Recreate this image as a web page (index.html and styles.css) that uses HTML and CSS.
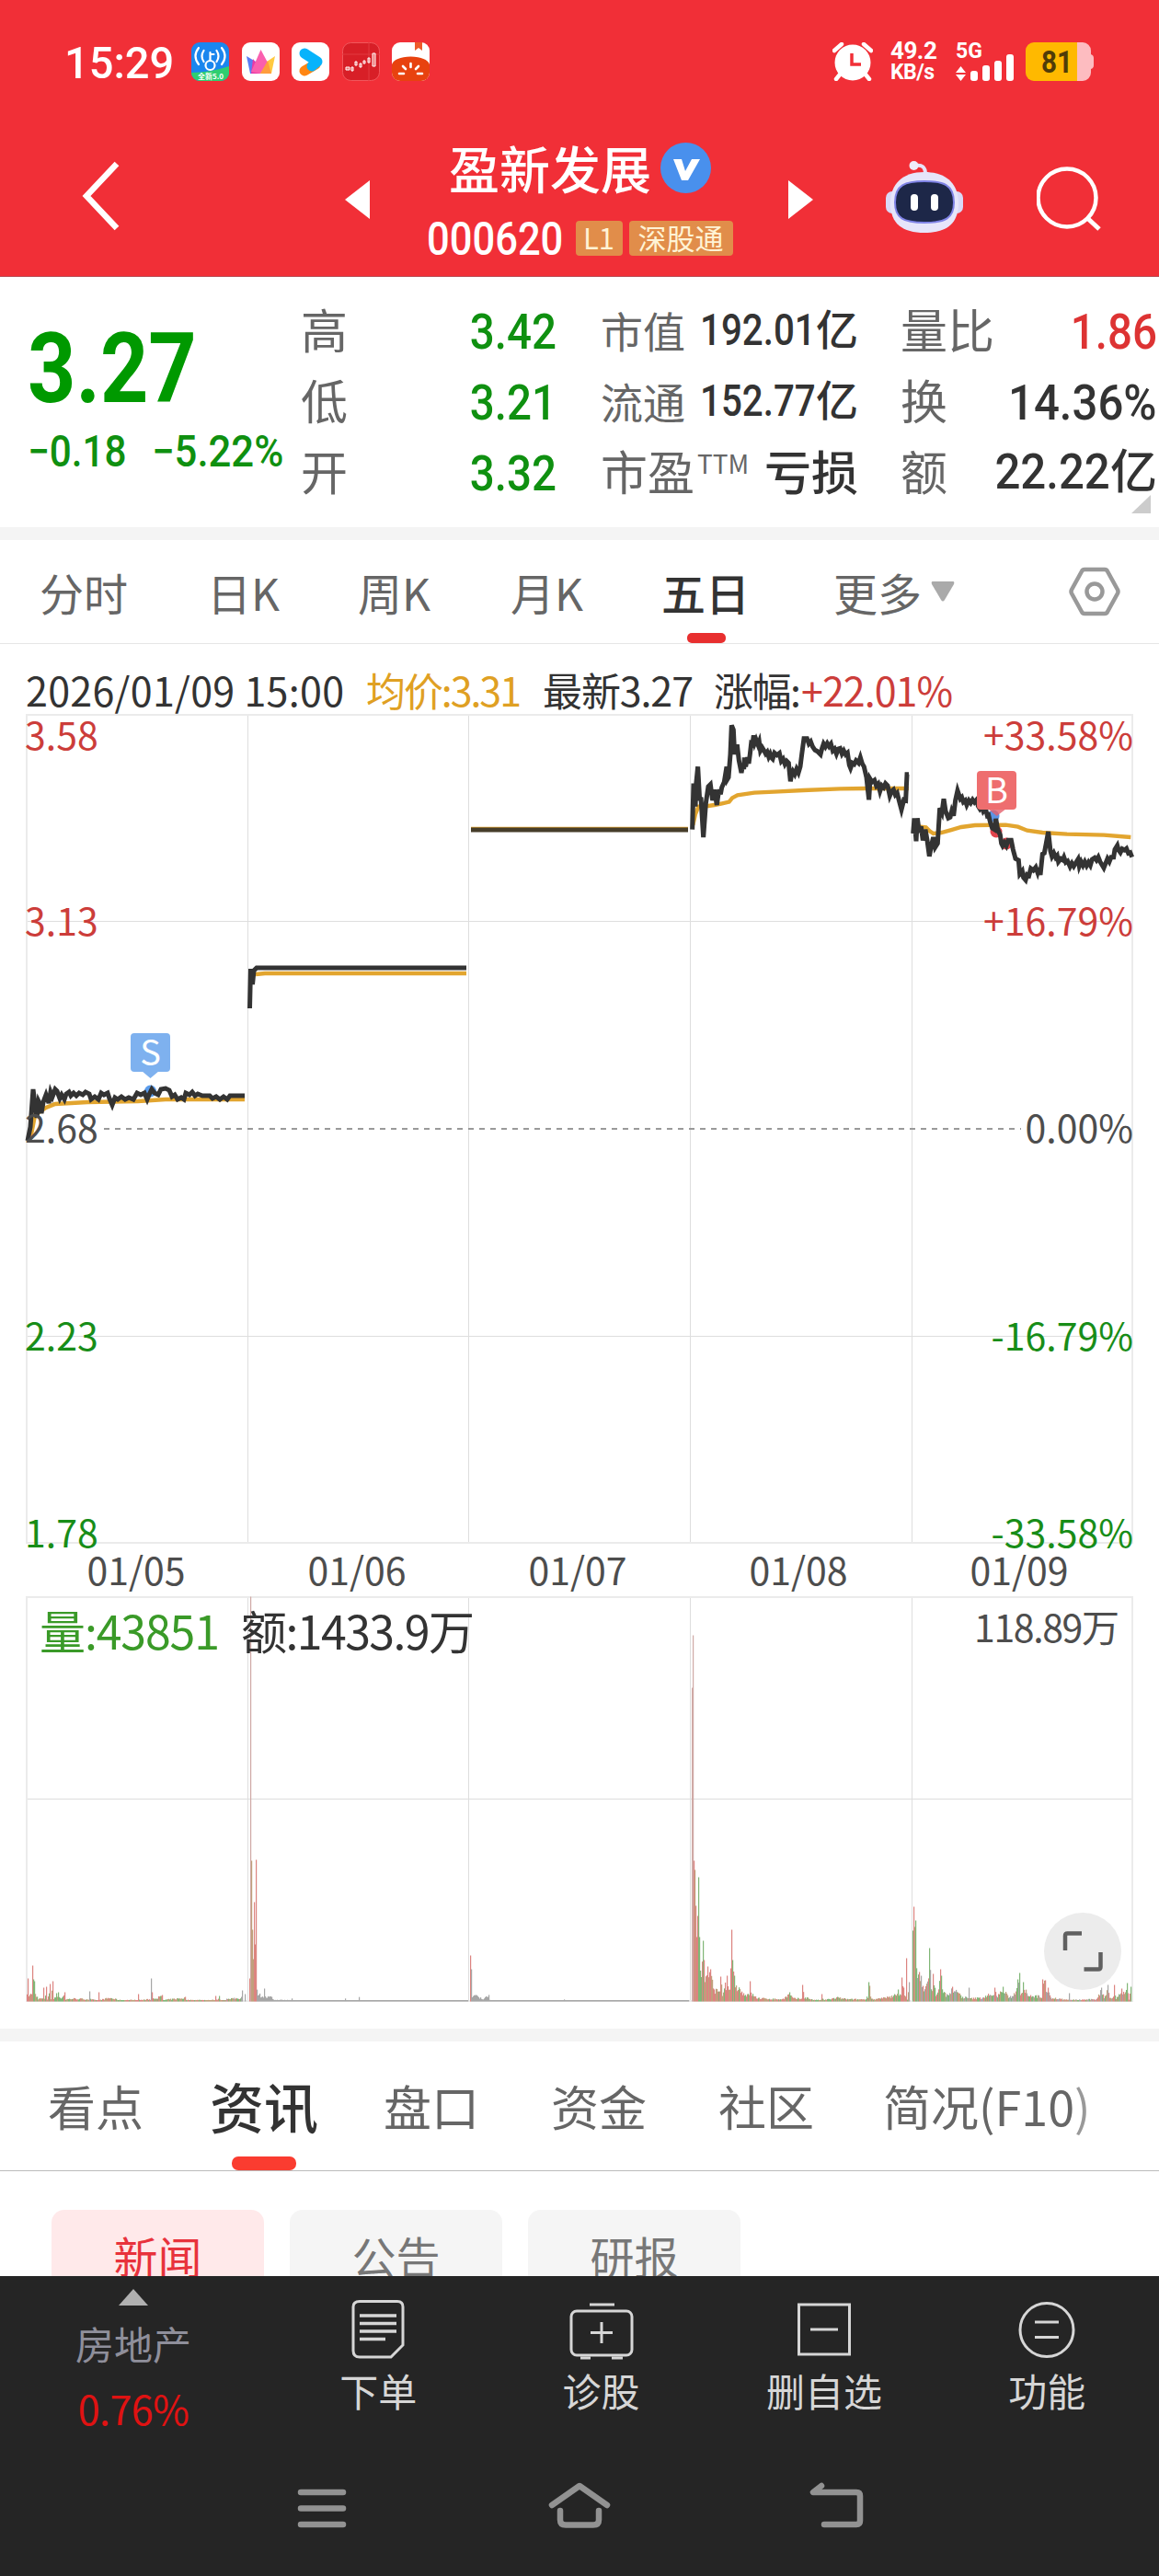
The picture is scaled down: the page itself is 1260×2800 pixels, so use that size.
FILE: index.html
```html
<!DOCTYPE html>
<html lang="zh-CN">
<head>
  <meta charset="UTF-8" />
  <title>盈新发展 000620</title>
  <link rel="stylesheet" href="styles.css">
</head>
<body>
  <div class="status-bar">
    <span class="clock">15:29</span>
    <div class="app-icons">
      <svg width="41" height="42" viewBox="0 0 41 42">
        <rect width="41" height="42" rx="9" fill="#1b86ee"/>
        <path d="M0 33 Q20 33 41 26 V33 a9 9 0 0 1 -9 9 H9 a9 9 0 0 1 -9 -9z" fill="#2fce70"/>
        <g fill="none" stroke="#fff" stroke-width="2.2" stroke-linecap="round">
          <circle cx="20.500" cy="25" r="5"/>
          <path d="M20.500 20V11M20.500 13h4M13.500 9q-4 6 0 12M27.500 9q4 6 0 12M8 6q-7 9 0 18M33 6q7 9 0 18"/>
        </g>
        <text x="21" y="40" class="app-tag">全新5.0</text>
      </svg>
      <svg width="41" height="42" viewBox="0 0 41 42">
        <rect width="41" height="42" rx="9" fill="#fff"/>
        <path d="M5 15 L20 24 L15 34 H9z" fill="#5a7cf5"/>
        <path d="M36 15 L21 25 L20 34 H32z" fill="#ffc940"/>
        <path d="M12 18 L20 28 V34 H10z" fill="#e83aa8"/>
        <path d="M20.500 8 L28 22 L20 34 L10 32z" fill="#fa5fae"/>
        <path d="M28 20 L32 34 H20z" fill="#ff9d3d"/>
      </svg>
      <svg width="41" height="42" viewBox="0 0 41 42">
        <rect width="41" height="42" rx="9" fill="#fff"/>
        <path d="M14 31 L26 24" stroke="#ff8612" stroke-width="11" stroke-linecap="round"/>
        <path d="M14 12 L28 21 L22 26" fill="none" stroke="#06b3fb" stroke-width="11" stroke-linecap="round" stroke-linejoin="round"/>
      </svg>
      <svg width="41" height="42" viewBox="0 0 41 42">
        <rect x=".5" y=".5" width="40" height="41" rx="9" fill="#d81f27" stroke="#f0575c"/>
        <path d="M0 13h41M29 0v42" stroke="#e33b41"/>
        <path d="M4 27h4v3h-4zM10 27h2v4h-2zM14 21h2v4h-2zM19 23h2v4h-2zM23 20h2v3h-2zM28 17h2v5h-2zM33 12h3v14h-3z" fill="#e77" stroke="#fff" stroke-width="1"/>
      </svg>
      <svg width="41" height="42" viewBox="0 0 41 42">
        <rect width="41" height="42" rx="9" fill="#fff"/>
        <path d="M25 0h8v9l-4-3l-4 3z" fill="#ee5a2a"/>
        <path d="M0 24 Q3 16 20.500 15.500 Q38 16 41 24 V33 a9 9 0 0 1 -9 9 H9 a9 9 0 0 1 -9 -9z" fill="#e8420f"/>
        <path d="M8 34l5 0M12 26l3 3M20.500 23v4M29 26l-3 3M33 34l-5 0" stroke="#fff" stroke-width="2.600" stroke-linecap="round"/>
      </svg>
    </div>
    <div class="status-right">
      <svg width="44" height="42" viewBox="0 0 44 42">
        <circle cx="22" cy="22" r="19.500" fill="#fff"/>
        <path d="M2 9l8-7M42 9l-8-7M8 35l-4 5M36 35l4 5" stroke="#fff" stroke-width="4.500" stroke-linecap="round"/>
        <path d="M21 12v12h10" fill="none" stroke="#f12f37" stroke-width="3.500"/>
      </svg>
      <div class="net-speed"><span>49.2</span><span>KB/s</span></div>
      <svg class="signal" width="64" height="42" viewBox="0 0 64 42">
        <text x="0" y="17" class="signal-text">5G</text>
        <path d="M0 33l5.500-7l5.500 7zM0 35l5.500 7l5.500-7z" fill="#fff"/>
        <rect x="16" y="31" width="8" height="11" rx="3" fill="#fff"/>
        <rect x="29" y="25" width="8" height="17" rx="3" fill="#fff"/>
        <rect x="42" y="20" width="8" height="22" rx="3" fill="#fff"/>
        <rect x="55" y="13" width="8" height="29" rx="3" fill="#fff"/>
      </svg>
      <svg width="75" height="42" viewBox="0 0 75 42">
        <path d="M55 0h7a9 9 0 0 1 9 9v4q3 1 3 4v8q0 3 -3 4v4a9 9 0 0 1 -9 9h-7z" fill="#fdbcc0"/>
        <path d="M9 0h47v42h-47a9 9 0 0 1 -9 -9v-24a9 9 0 0 1 9-9z" fill="#ffb900"/>
        <text x="34" y="33" class="battery-text" textLength="34" lengthAdjust="spacingAndGlyphs">81</text>
      </svg>
    </div>
  </div>

  <header class="header">
    <svg class="back" width="42" height="80" viewBox="0 0 42 80">
      <path d="M39 4L6 39L39 74" fill="none" stroke="#fff" stroke-width="6.500"/>
    </svg>
    <svg class="prev" width="27" height="42" viewBox="0 0 27 42"><path d="M0 21L27 0V42z" fill="#fff"/></svg>
    <div class="stock">
      <div class="stock-name">
        <span>盈新发展</span>
        <svg width="55" height="55" viewBox="0 0 55 55">
          <circle cx="27.500" cy="27.500" r="27.500" fill="#4990ed"/>
          <path d="M14 18H23L27 31L34 18H43L30 41H23z" fill="#fff"/>
        </svg>
      </div>
      <div class="stock-code">
        <span class="code">000620</span>
        <span class="badge">L1</span>
        <span class="badge wide">深股通</span>
      </div>
    </div>
    <svg class="next" width="27" height="42" viewBox="0 0 27 42"><path d="M27 21L0 0V42z" fill="#fff"/></svg>
    <svg class="robot" width="84" height="78" viewBox="0 0 84 78">
      <path d="M32 5q11-2 11 9" fill="none" stroke="#e7e3f8" stroke-width="4"/>
      <circle cx="30.500" cy="5" r="5" fill="#efedfb"/>
      <rect x="0" y="33" width="84" height="24" rx="7" fill="#d9d9f7"/>
      <path d="M42 12C66 12 79 25 79 46C79 68 66 78 42 78C18 78 5 68 5 46C5 25 18 12 42 12z" fill="#e6e5fa"/>
      <path d="M42 22C63 22 74 26 74 45C74 62 65 67 42 67C19 67 10 62 10 45C10 26 21 22 42 22z" fill="#1d2748" stroke="#7f83e6" stroke-width="2"/>
      <rect x="27" y="36" width="8" height="18" rx="4" fill="#fff"/>
      <rect x="49" y="36" width="8" height="18" rx="4" fill="#fff"/>
    </svg>
    <svg class="search" width="70" height="70" viewBox="0 0 70 70">
      <circle cx="33" cy="34" r="31.500" fill="none" stroke="#fff" stroke-width="4.500"/>
      <path d="M54 55L68 68" stroke="#fff" stroke-width="5"/>
    </svg>
  </header>

  <section class="quote">
    <div class="price">
      <div class="price-now">3.27</div>
      <div class="price-change"><span>−0.18</span><span class="pct">−5.22%</span></div>
    </div>
    <div class="quote-col">
      <div class="quote-row"><span class="label">高</span><span class="num green">3.42</span></div>
      <div class="quote-row"><span class="label">低</span><span class="num green">3.21</span></div>
      <div class="quote-row"><span class="label">开</span><span class="num green">3.32</span></div>
    </div>
    <div class="quote-col">
      <div class="quote-row small"><span class="label">市值</span><span class="value"><span class="num">192.01</span>亿</span></div>
      <div class="quote-row small"><span class="label">流通</span><span class="value"><span class="num">152.77</span>亿</span></div>
      <div class="quote-row"><span class="label">市盈<sup>TTM</sup></span><span class="value">亏损</span></div>
    </div>
    <div class="quote-col">
      <div class="quote-row"><span class="label">量比</span><span class="num red">1.86</span></div>
      <div class="quote-row"><span class="label">换</span><span class="num turnover">14.36%</span></div>
      <div class="quote-row"><span class="label">额</span><span class="value"><span class="num turnover">22.22</span>亿</span></div>
    </div>
    <svg class="corner" width="21" height="20" viewBox="0 0 21 20"><path d="M21 0V20H0z" fill="#ccc"/></svg>
  </section>

  <nav class="period-tabs">
    <span class="tab">分时</span>
    <span class="tab">日K</span>
    <span class="tab">周K</span>
    <span class="tab">月K</span>
    <span class="tab active">五日</span>
    <span class="tab more">更多<svg width="26" height="22" viewBox="0 0 26 22"><path d="M2 0H24Q26 0 25 3L15 20Q13 23 11 20L1 3Q0 0 2 0z" fill="#aaa"/></svg></span>
    <svg class="settings" width="56" height="54" viewBox="0 0 56 54">
      <path d="M17 3H39Q41 3 42 5L53 25Q54 27 53 29L42 49Q41 51 39 51H17Q15 51 14 49L3 29Q2 27 3 25L14 5Q15 3 17 3z" fill="none" stroke="#999" stroke-width="4.500"/>
      <circle cx="28" cy="27" r="8.500" fill="none" stroke="#999" stroke-width="4.500"/>
    </svg>
  </nav>

  <svg class="chart" width="1260" height="1505" viewBox="0 700 1260 1505">
    <g class="legend">
      <text x="28" y="768" textLength="346">2026/01/09 15:00</text>
      <text x="398" y="768" textLength="169" class="avg-text">均价:3.31</text>
      <text x="590" y="768" textLength="164">最新3.27</text>
      <text x="776" y="768" textLength="95">涨幅:</text>
      <text x="871" y="768" textLength="165" class="up">+22.01%</text>
    </g>

    <!-- grid -->
    <g class="grid">
      <path d="M269.500 777V1677M509.500 777V1677M750.500 777V1677M991.500 777V1677M28 1001.500H1231M28 1452.500H1231"/>
      <path d="M269.500 1736V2175M509.500 1736V2175M750.500 1736V2175M991.500 1736V2175M28 1955.500H1231"/>
      <rect x="29" y="777" width="1202" height="900" class="frame"/>
      <rect x="29" y="1736" width="1202" height="439" class="frame"/>
    </g>
    <path d="M113 1227H1110" class="zero-line"/>

    <!-- trade points -->
    <circle cx="163.500" cy="1186" r="6.500" fill="#5b9cec"/>
    <circle cx="1080" cy="887" r="6.500" fill="#5b94e4"/>
    <circle cx="1083" cy="904" r="6.500" fill="#e0444c"/>
    <circle cx="1094" cy="917" r="6.500" fill="#e0444c"/>

    <!-- 01/05 -->
    <polyline class="avg" points="33,1238 38,1212 50,1204 60,1200 95,1198 150,1197 180,1195 266,1195"/>
    <polyline class="line" points="30,1240 33,1225 36,1184 38,1200 40,1215 42,1197 43,1199 45,1210 47,1198 50,1190 53,1199 55,1187 57,1192 60,1184 62,1186 65,1194 67,1190 70,1195 72,1189 75,1187 77,1191 80,1188 83,1191 86,1188 90,1190 93,1187 97,1189 99,1195 103,1192 107,1195 110,1188 113,1190 117,1188 119,1194 122,1201 125,1193 128,1195 132,1192 136,1195 140,1193 145,1195 149,1188 153,1190 157,1188 160,1195 162,1190 165,1184 168,1188 172,1190 175,1184 180,1183 184,1185 187,1192 190,1190 193,1195 197,1193 200,1195 202,1188 206,1190 209,1187 212,1191 215,1189 220,1191 228,1191 231,1194 235,1192 239,1195 243,1192 247,1195 250,1191 266,1191"/>
    <!-- 01/06 -->
    <polyline class="avg" points="278,1059 288,1058 507,1058"/>
    <polyline class="line" points="271.500,1096 272.500,1053 274.500,1070 276,1055 279,1052 507,1052"/>
    <!-- 01/07 -->
    <polyline class="avg" points="512,901 748,901"/>
    <polyline class="line flat" points="512,902 748,902"/>
    <!-- 01/08, 01/09 -->
    <g transform="translate(740 770) scale(.33333)">
      <polyline class="avg x3" points="40,380 48,345 58,320 70,318 90,318 110,315 135,310 158,305 168,292 185,283 240,275 320,271 400,267 520,262 600,261 744,261"/>
      <polyline class="line x3" points="38,395 42,245 48,320 50,250 56,190 62,300 66,290 74,420 82,310 90,255 97,248 104,300 110,265 118,315 122,285 126,265 130,280 134,258 142,240 150,190 153,230 156,225 162,150 166,55 172,70 176,150 184,118 190,170 198,210 203,180 206,198 208,160 212,190 218,160 222,180 226,150 230,115 234,118 238,88 242,112 246,102 252,118 256,108 260,138 266,128 272,138 277,148 282,142 287,158 292,148 297,162 300,165 306,145 314,152 322,146 328,172 334,165 340,182 346,172 352,178 358,238 362,215 366,205 372,215 378,198 384,210 390,190 395,150 402,98 412,98 418,115 424,108 430,124 438,136 446,140 456,150 461,130 466,115 472,125 478,114 484,124 490,116 496,138 502,132 508,148 514,132 520,130 526,148 532,138 538,150 544,145 550,185 554,195 560,178 566,182 572,170 580,178 586,160 592,180 598,190 606,225 614,298 618,230 624,240 632,234 638,252 644,246 650,270 656,252 662,258 668,245 675,252 682,285 688,270 694,265 700,282 706,276 712,300 720,330 728,298 734,300 738,215 744,215"/>
      <polyline class="avg x3" points="775,385 800,388 812,400 824,408 850,405 880,397 915,387 960,381 1060,380 1100,386 1130,398 1180,405 1260,410 1380,413 1468,420"/>
      <polyline class="line x3" points="758,408 762,358 768,433 772,358 778,405 784,385 790,430 798,395 804,430 811,482 818,445 824,420 830,453 838,440 845,325 852,340 858,295 864,335 868,345 873,358 879,355 884,335 890,350 896,300 903,268 912,295 917,290 922,305 928,300 933,315 940,300 946,308 952,298 958,306 966,297 970,318 976,328 982,320 987,335 994,326 1000,350 1004,348 1010,372 1016,390 1024,395 1028,360 1034,395 1042,412 1046,440 1050,448 1056,438 1062,448 1068,430 1078,430 1084,460 1092,490 1102,495 1106,540 1114,530 1118,552 1125,560 1130,542 1136,545 1142,522 1150,528 1158,518 1164,535 1168,520 1173,543 1180,475 1186,472 1192,440 1199,402 1206,465 1211,483 1217,472 1223,486 1228,480 1232,500 1240,490 1246,494 1250,485 1256,502 1262,498 1270,516 1276,505 1282,515 1288,505 1296,492 1300,515 1306,500 1312,512 1318,500 1324,513 1330,502 1336,512 1342,492 1350,487 1356,495 1362,485 1368,500 1374,510 1380,520 1386,505 1392,490 1398,500 1404,485 1412,485 1416,460 1424,447 1428,462 1434,470 1440,458 1448,462 1454,457 1460,472 1466,470 1472,485"/>
    </g>

    <g class="marker">
      <path d="M154 1164H173L163.500 1172z" fill="#7eb1ef"/>
      <rect x="142" y="1123" width="43" height="42" rx="4" fill="#7eb1ef"/>
      <text x="163.500" y="1158">S</text>
      <path d="M1074 879H1094L1083.500 887z" fill="#e5606c" opacity=".8"/>
      <rect x="1062" y="838" width="43" height="42" rx="4" fill="#ee6e6f"/>
      <text x="1083.500" y="873">B</text>
    </g>

    <g class="axis">
      <text x="27" y="815" class="up">3.58</text>
      <text x="27" y="1017" class="up">3.13</text>
      <text x="27" y="1242">2.68</text>
      <text x="27" y="1468" class="down">2.23</text>
      <text x="27" y="1682" class="down">1.78</text>
    </g>
    <g class="axis end">
      <text x="1232" y="815" class="up">+33.58%</text>
      <text x="1232" y="1017" class="up">+16.79%</text>
      <text x="1232" y="1242">0.00%</text>
      <text x="1232" y="1468" class="down">-16.79%</text>
      <text x="1232" y="1682" class="down">-33.58%</text>
      <text x="1217" y="1785" textLength="158">118.89万</text>
    </g>
    <g class="axis mid">
      <text x="148" y="1723">01/05</text>
      <text x="388" y="1723">01/06</text>
      <text x="628" y="1723">01/07</text>
      <text x="868" y="1723">01/08</text>
      <text x="1108" y="1723">01/09</text>
    </g>

    <g id="volume"></g>
    <g class="volume-text">
      <text x="43" y="1793" textLength="196">量:43851</text>
      <text x="262" y="1793" textLength="254">额:1433.9万</text>
    </g>

    <circle cx="1177" cy="2121" r="42" fill="#ececec"/>
    <path d="M1158 2120V2104Q1158 2101.500 1160.500 2101.500H1176M1178.500 2140.500H1194Q1196.500 2140.500 1196.500 2138V2122" fill="none" stroke="#606060" stroke-width="4.500"/>
  </svg>

  <nav class="info-tabs">
    <span class="tab">看点</span>
    <span class="tab active">资讯</span>
    <span class="tab">盘口</span>
    <span class="tab">资金</span>
    <span class="tab">社区</span>
    <span class="tab">简况(F10<i>)</i></span>
  </nav>

  <div class="chips">
    <span class="chip active">新闻</span>
    <span class="chip">公告</span>
    <span class="chip">研报</span>
  </div>

  <footer class="bottom">
    <div class="toolbar">
      <div class="sector">
        <svg width="32" height="18" viewBox="0 0 32 18"><path d="M16 0L32 18H0z" fill="#b0b0b0"/></svg>
        <span class="sector-name">房地产</span>
        <span class="sector-pct">0.76%</span>
      </div>
      <div class="tool">
        <svg width="70" height="66" viewBox="0 0 70 66">
          <path d="M15 2.500H56Q62 2.500 62 8.500V50L49 63H15Q8 63 8 56V8.500Q8 2.500 15 2.500z"/>
          <path d="M15 18H55M15 26.500H55M15 35H55M15 43.500H43" stroke-width="3.500"/>
        </svg>
        <span>下单</span>
      </div>
      <div class="tool">
        <svg width="70" height="66" viewBox="0 0 70 66">
          <rect x="2" y="13" width="66" height="48" rx="6"/>
          <path d="M22 6H49M35 25V48M23 36.500H47M12 64H23M46 64H58"/>
        </svg>
        <span>诊股</span>
      </div>
      <div class="tool">
        <svg width="70" height="66" viewBox="0 0 70 66">
          <rect x="7.500" y="6" width="55" height="54"/>
          <path d="M20 33H50"/>
        </svg>
        <span>删自选</span>
      </div>
      <div class="tool">
        <svg width="70" height="66" viewBox="0 0 70 66">
          <circle cx="35" cy="33.500" r="29"/>
          <path d="M22 25H48M22 41.500H48"/>
        </svg>
        <span>功能</span>
      </div>
    </div>
    <div class="system-nav">
      <svg width="70" height="54" viewBox="0 0 70 54"><path d="M12 11H58M12 28.500H58M12 46H58"/></svg>
      <svg width="70" height="54" viewBox="0 0 70 54"><path d="M5 25L35 4L65 25M14 31V41Q14 46.500 20 46.500H50Q56 46.500 56 41V31"/></svg>
      <svg width="70" height="54" viewBox="0 0 70 54"><path d="M18 4L9 11H56Q60 11 60 15V42Q60 46 56 46H21"/></svg>
    </div>
  </footer>

  <script src="volume.js"></script>
</body>
</html>
```
FILE: styles.css
```css
body {
  margin: 0;
  width: 1260px;
  height: 2800px;
  overflow: hidden;
  background: #fff;
  color: #333;
  font-family: "Noto Sans CJK SC", sans-serif;
  line-height: 1;
  white-space: nowrap;
}

svg {
  display: block;
  flex-shrink: 0;
}

/* status bar */
.status-bar {
  display: flex;
  align-items: center;
  box-sizing: border-box;
  height: 140px;
  padding: 0 70px 6px 70px;
  background: #f12f37;
  color: #fff;
}

.clock {
  width: 138px;
  font: 500 49px/1 Roboto, sans-serif;
  transform: translateY(1px) scaleX(0.96);
  transform-origin: left;
}

.app-icons {
  display: flex;
  gap: 13.6px;
}

.app-tag {
  fill: #fff;
  font-size: 8px;
  font-weight: 700;
  text-anchor: middle;
}

.status-right {
  display: flex;
  align-items: center;
  margin-left: auto;
}

.net-speed {
  display: flex;
  flex-direction: column;
  gap: 4px;
  width: 52px;
  margin: 0 19px 0 19px;
  font: 700 26px/20px Roboto, sans-serif;
  letter-spacing: -0.5px;
}

.net-speed span:last-child {
  font-size: 23px;
}

.signal {
  margin-right: 12px;
}

.signal-text {
  fill: #fff;
  font: 700 23px Roboto, sans-serif;
}

.battery-text {
  fill: #4f3c08;
  font: 700 33px Roboto, sans-serif;
  text-anchor: middle;
}

/* header */
.header {
  display: flex;
  align-items: flex-start;
  height: 160px;
  padding-left: 88px;
  background: #f12f37;
  border-bottom: 1px solid #b84a52;
  color: #fff;
}

.back {
  margin-top: 34px;
}

.prev {
  margin: 56px 0 0 245px;
}

.next {
  margin-top: 56px;
}

.stock {
  width: 455px;
  padding-top: 15px;
}

.stock-name {
  display: flex;
  justify-content: center;
  gap: 10px;
  height: 55px;
  margin-bottom: 30px;
  padding-left: 2px;
  font-size: 55px;
  font-weight: 500;
  line-height: 52px;
}

.stock-code {
  display: flex;
  justify-content: center;
  align-items: center;
  height: 38px;
  padding-left: 1px;
}

.code {
  width: 148px;
  margin-right: 14px;
  font: 500 50px/1 Roboto, sans-serif;
  transform: translateY(1px) scaleX(0.87);
  transform-origin: left;
}

.badge {
  width: 51px;
  height: 38px;
  margin-right: 7px;
  background: #e18d4a;
  border-radius: 4px;
  color: #fff3d5;
  font-size: 31px;
  line-height: 36px;
  text-align: center;
}

.badge.wide {
  width: 113px;
  margin-right: 0;
}

.robot {
  margin: 35px 0 0 79px;
}

.search {
  margin: 41px 0 0 80px;
}

/* quote */
.quote {
  position: relative;
  display: grid;
  grid-template-columns: 297px 278px 280px 279px;
  height: 251px;
  padding: 21px 0 0 30px;
  border-bottom: 14px solid #f4f4f4;
}

.quote-col:nth-child(3) {
  margin-left: 48px;
  margin-right: -48px;
}

.quote-col:nth-child(4) {
  margin-left: 94px;
  margin-right: -94px;
}

.price {
  color: #009900;
  font-family: Roboto, sans-serif;
}

.price-now {
  margin-top: 27px;
  font-size: 105px;
  font-weight: 700;
  transform: scaleX(0.87);
  transform-origin: left;
}

.price-change {
  display: flex;
  margin-top: 13px;
  font-size: 48px;
  font-weight: 500;
  color: #0f9010;
}

.price-change span {
  width: 135px;
  transform: scaleX(0.88);
  transform-origin: left;
}

.price-change .pct {
  transform: scaleX(0.91);
}

.quote-row {
  display: flex;
  align-items: center;
  justify-content: space-between;
  height: 77px;
  font-size: 51px;
}

.quote-row.small {
  font-size: 46px;
}

.label {
  color: #666;
  margin-top: -6px;
}

.label sup {
  font-size: 28px;
  vertical-align: 18px;
  line-height: 0;
  margin-left: 3px;
}

.value {
  margin-top: -6px;
  font-weight: 500;
}

.num {
  display: inline-block;
  margin-left: -30px;
  font: 500 54px/1 Roboto, sans-serif;
  transform: scaleX(0.88);
  transform-origin: right;
}

.turnover {
  transform: scaleX(0.91);
}

.small .num {
  font-size: 48px;
  transform: scaleX(0.84);
}

.green {
  color: #0f9010;
}

.red {
  color: #dd3333;
}

.corner {
  position: absolute;
  right: 9px;
  bottom: 15px;
}

/* period tabs */
.period-tabs {
  display: flex;
  align-items: center;
  height: 112px;
  border-bottom: 1px solid #e6e6e6;
  font-size: 48px;
}

.tab {
  position: relative;
  color: #666;
}

.period-tabs .tab {
  line-height: 108px;
}

.period-tabs .tab:nth-child(1) { margin-left: 43px; width: 182px; }
.period-tabs .tab:nth-child(2) { width: 164px; }
.period-tabs .tab:nth-child(3) { width: 166px; }
.period-tabs .tab:nth-child(4) { width: 164px; }
.period-tabs .tab:nth-child(5) { width: 97px; }

.tab.active {
  color: #333;
  font-weight: 500;
}

.period-tabs .active::after {
  content: "";
  position: absolute;
  left: 28px;
  bottom: -2px;
  width: 42px;
  height: 11px;
  border-radius: 5px;
  background: #e82f2f;
}

.more {
  display: flex;
  align-items: center;
  gap: 10px;
  margin-left: 90px;
}

.settings {
  margin-left: 124px;
}

/* chart */
.chart text {
  fill: #333;
  font-size: 43px;
}

.chart .avg-text {
  fill: #dfa023;
}

.chart .up {
  fill: #cc3d3a;
}

.chart .down {
  fill: #188d18;
}

.grid {
  fill: none;
  stroke: #dedede;
}

.grid .frame {
  stroke: #ebebeb;
  stroke-width: 2;
}

.zero-line {
  stroke: #999;
  stroke-width: 2;
  stroke-dasharray: 6 6;
}

.line,
.avg {
  fill: none;
  stroke: #333;
  stroke-width: 5;
}

.avg {
  stroke: #e2a52f;
  stroke-width: 4.5;
}

.line.flat {
  stroke: #463d2a;
}

.line.x3 {
  stroke-width: 15;
}

.avg.x3 {
  stroke-width: 13;
}

.chart .axis text {
  fill: #4d4d4d;
  font-size: 41px;
}

.chart .axis .up {
  fill: #cc3d3a;
}

.chart .axis .down {
  fill: #188d18;
}

.end {
  text-anchor: end;
}

.mid,
.marker {
  text-anchor: middle;
}

.chart .marker text {
  fill: #fff;
  font-size: 38px;
}

.chart .volume-text text {
  font-size: 50px;
}

.chart .volume-text text:first-child {
  fill: #3a9a28;
}

#volume .r { fill: #dc8480; }
#volume .g { fill: #80b676; }
#volume .t { fill: #c0a07c; }
#volume .n { fill: #a6a6a6; }
#volume .p { fill: #cfa9a6; }

/* info tabs */
.info-tabs {
  display: flex;
  height: 140px;
  padding-left: 52px;
  border-top: 14px solid #f4f4f4;
  border-bottom: 1px solid #bbb;
  font-size: 52px;
  line-height: 139px;
}

.info-tabs .tab:nth-child(1) { width: 176px; }
.info-tabs .tab:nth-child(2) { width: 189px; font-size: 59px; }
.info-tabs .tab:nth-child(3) { width: 182px; }
.info-tabs .tab:nth-child(4) { width: 182px; }
.info-tabs .tab:nth-child(5) { width: 179px; }

.info-tabs i {
  color: #999;
  font-style: normal;
}

.info-tabs .active::after {
  content: "";
  position: absolute;
  left: 24px;
  bottom: 0;
  width: 70px;
  height: 15px;
  border-radius: 7px;
  background: #fa3c30;
}

.chips {
  display: flex;
  gap: 28px;
  height: 72px;
  padding: 42px 0 0 56px;
  overflow: hidden;
}

.chip {
  width: 231px;
  height: 100px;
  border-radius: 14px;
  background: #f5f5f5;
  color: #777;
  font-size: 48px;
  line-height: 98px;
  text-align: center;
}

.chip.active {
  background: #ffe9ea;
  color: #e8323c;
}

/* bottom bars */
.bottom {
  position: relative;
  height: 326px;
  background: #252525;
}

.toolbar {
  display: flex;
  height: 200px;
}

.sector {
  display: flex;
  flex-direction: column;
  align-items: center;
  width: 290px;
  padding-top: 14px;
}

.sector-name {
  margin-top: 20px;
  color: #8f8f9b;
  font-size: 42px;
}

.sector-pct {
  margin-top: 28px;
  color: #e01212;
  font-size: 43px;
  letter-spacing: -0.5px;
}

.tool {
  display: flex;
  flex-direction: column;
  align-items: center;
  width: 242.4px;
  padding-top: 25px;
  gap: 12px;
  color: #d6d6d6;
  font-size: 42px;
}

.tool svg {
  fill: none;
  stroke: #d6d6d6;
  stroke-width: 3;
}

.system-nav {
  display: flex;
  justify-content: center;
  gap: 210px;
  padding-top: 24px;
}

.system-nav svg {
  fill: none;
  stroke: #929292;
  stroke-width: 6.5;
  stroke-linecap: round;
  stroke-linejoin: round;
}
```
FILE: volume.js
```js
// per-minute volume bars: [minute, height, color] keys, minutes between keys are interpolated
const BASE = 2175.5;
const days = [
  { x: 29, mix: 'rgt', keys: [[0,8],[1,25,'r'],[2,9],[5,10],[6,39,'r'],[7,24,'g'],[8,22,'g'],[9,10],[12,4],[17,4],[18,15,'r'],[19,3],[21,16,'r'],[22,3],[25,19,'r'],[26,3],[28,22,'r'],[29,4],[32,9,'g'],[34,10,'g'],[36,4],[41,10,'r'],[42,3],[50,4],[67,3],[68,11,'n'],[69,3],[77,1],[78,10,'r'],[79,2],[90,5],[100,2],[120,2],[121,8,'r'],[122,2],[134,3],[135,25,'n'],[136,10,'r'],[137,4],[147,7,'r'],[148,2],[172,5,'r'],[173,2],[204,2],[205,6,'r'],[206,2],[209,6,'g'],[210,2],[215,2],[217,3,'n'],[225,4,'n'],[233,5,'n'],[234,12,'n'],[235,0],[237,8,'n']] },
  { x: 270, mix: 'n', keys: [[1,25,'r'],[2,440,'p'],[3,153,'t'],[4,78,'t'],[5,46,'t'],[6,108,'r'],[7,62,'r'],[8,154,'r'],[9,14],[12,9],[16,7],[17,16],[18,6],[24,6],[28,2],[46,2],[47,4],[48,1.5],[104,1],[105,5],[106,1],[119,1],[120,6],[121,1.5],[238,1.5]] },
  { x: 510, mix: 'n', keys: [[1,50,'r'],[2,35,'n'],[3,5],[6,10],[11,6],[15,3],[17,5],[20,8],[21,13],[22,2],[30,1.5],[102,1.5],[103,4],[104,1.5],[238,1.5]] },
  { x: 750, mix: 'rgt', keys: [[2,341,'p'],[3,398,'p'],[4,153,'r'],[5,143,'t'],[6,104,'r'],[7,70,'r'],[8,93,'r'],[9,135,'g'],[10,70,'g'],[11,43],[12,33],[13,45],[14,66,'g'],[15,45,'r'],[16,33],[17,28],[19,38,'r'],[22,35,'r'],[25,20],[28,15],[31,12],[33,27,'r'],[35,10],[40,28,'r'],[43,15],[44,36,'r'],[45,78,'r'],[46,45,'g'],[48,28,'g'],[52,20],[56,13],[60,10],[64,8],[65,22,'r'],[67,10],[72,5],[80,4],[100,3],[108,10,'g'],[112,4],[121,4],[122,18,'r'],[124,6],[135,2],[142,2],[143,8,'r'],[145,2],[160,5,'g'],[172,3],[190,3],[193,7],[194,21,'g'],[195,17,'t'],[197,4],[200,3],[212,5],[220,7],[226,13,'g'],[229,8],[230,26,'r'],[232,15,'r'],[234,9],[235,47,'r'],[236,2],[238,21,'n']] },
  { x: 991, mix: 'rgtn', keys: [[1,77,'g'],[2,103,'r'],[3,81,'t'],[4,88,'g'],[5,40],[7,33],[10,33],[13,22],[16,20],[18,32],[19,58,'g'],[20,35],[22,16],[23,30,'r'],[26,10],[29,15],[31,35,'r'],[32,28,'g'],[34,12],[38,9],[44,16,'r'],[50,12],[55,6],[61,5],[62,15,'n'],[63,4],[76,5],[83,9],[86,7],[90,15,'r'],[92,7],[99,16,'g'],[104,7],[110,7],[115,24,'g'],[117,31,'g'],[118,12],[121,21,'g'],[125,12],[130,8],[136,7],[141,7],[142,24,'r'],[145,23,'r'],[148,15,'r'],[152,5],[165,3],[170,2],[171,9,'n'],[172,2],[200,3],[206,15,'n'],[209,6],[213,18,'n'],[215,5],[219,6],[220,18,'r'],[222,5],[228,14,'r'],[231,10],[234,20,'g'],[236,3],[238,16,'g']] }
];

let seed = 7;
function rand() {
  seed = (seed * 16807) % 2147483647;
  return seed / 2147483647;
}

const volume = document.getElementById('volume');
let bars = '';
days.forEach((day) => {
  for (let i = 0; i < day.keys.length; i++) {
    const [m, h, c] = day.keys[i];
    const next = day.keys[i + 1] || [m + 1, h];
    for (let k = m; k < next[0]; k++) {
      let height = h + (next[1] - h) * (k - m) / (next[0] - m);
      let color = c;
      if (k > m || !c) {
        color = day.mix[Math.floor(rand() * day.mix.length)];
        height = Math.max(1.5, height * (0.5 + rand() * 0.5));
      }
      if (h === 0) height = 0;
      bars += `<rect class="${color}" x="${day.x + k}" y="${BASE - height}" width="1.2" height="${height}"/>`;
    }
  }
});
volume.innerHTML = bars;
```
